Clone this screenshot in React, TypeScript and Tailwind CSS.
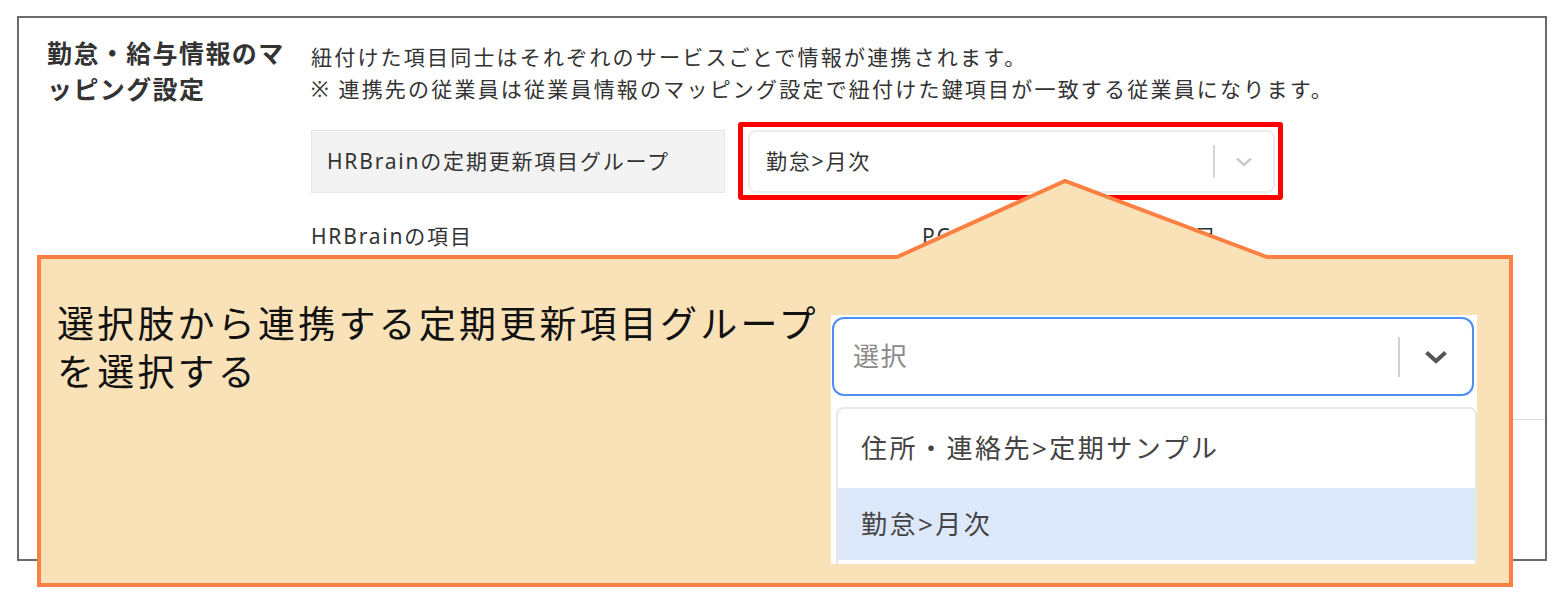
export default function App() {
  return (
    <div className="relative w-[1567px] h-[605px] bg-white overflow-hidden font-['Noto_Sans','Noto_Sans_CJK_JP',sans-serif]">
      {/* settings panel */}
      <div className="ml-[17px] mt-[16px] w-[1530px] h-[545px] border-2 border-[#6a6a6a] flex pt-[17px] pl-[28px]">
        <div className="w-[264px] shrink-0 text-[25px] leading-[36px] tracking-[1.4px] font-bold text-[#333]">
          勤怠・給与情報のマ
          <br />
          ッピング設定
        </div>
        <div className="flex-1 flex flex-col mt-[6px]">
          <p className="text-[21px] leading-[32px] tracking-[2.2px] text-[#333] whitespace-nowrap">
            紐付けた項目同士はそれぞれのサービスごとで情報が連携されます。
            <br />※ 連携先の従業員は従業員情報のマッピング設定で紐付けた鍵項目が一致する従業員になります。
          </p>
          <div className="flex items-center gap-[23px] mt-[25px]">
            <div className="w-[414px] h-[63px] bg-[#f3f3f3] border border-[#e6e6e6] flex items-center pl-[15px] text-[21px] tracking-[1.8px] text-[#333]">
              HRBrainの定期更新項目グループ
            </div>
            <div className="relative">
              <div className="w-[527px] h-[63px] border-2 border-[#ececec] rounded-[8px] flex items-center">
                <span className="flex-1 pl-[16px] text-[21px] tracking-[1.8px] text-[#333]">勤怠&gt;月次</span>
                <span className="w-[2px] h-[33px] bg-[#d6d6d6]" />
                <span className="w-[58px] flex justify-center">
                  <svg width="18" height="10" viewBox="0 0 18 10">
                    <polyline points="2,1.5 9,8 16,1.5" fill="none" stroke="#cccccc" strokeWidth="2.6" />
                  </svg>
                </span>
              </div>
              <div className="absolute left-[-10px] right-[-8px] top-[-8px] bottom-[-7px] border-[5px] border-[#ff0000] rounded-[3px]" />
            </div>
          </div>
          <div className="flex mt-[27px] text-[21px] leading-[32px] tracking-[1.8px] text-[#333]">
            <span className="w-[611px]">HRBrainの項目</span>
            <span>PCAクラウド 給与 DXの項目</span>
          </div>
          <div className="h-[168px] border-b border-[#dddddd]" />
        </div>
      </div>

      {/* callout shape */}
      <svg className="absolute left-0 top-0" width="1567" height="605" viewBox="0 0 1567 605">
        <polygon
          points="39,257 897,257 1065,181 1267,257 1511,257 1511,585 39,585"
          fill="#fae2b8"
          stroke="#fd8042"
          strokeWidth="4"
          strokeLinejoin="miter"
        />
      </svg>

      {/* callout content */}
      <div className="absolute left-[39px] top-[259px] w-[1472px] h-[326px] flex">
        <p className="pl-[18px] pt-[41px] text-[37px] leading-[48px] tracking-[3.2px] text-[#111] whitespace-nowrap">
          選択肢から連携する定期更新項目グループ
          <br />
          を選択する
        </p>
        <div className="ml-auto mr-[34px] mt-[56px] w-[646px] h-[249px] bg-white flex flex-col">
          <div className="ml-[1px] mt-[2px] w-[642px] h-[79px] border-2 border-[#4d8ff0] rounded-[12px] flex items-center">
            <span className="flex-1 pl-[19px] text-[26px] tracking-[1.5px] text-[#8a8a8a]">選択</span>
            <span className="w-[2px] h-[40px] bg-[#d2d2d2]" />
            <span className="w-[72px] flex justify-center">
              <svg width="24" height="14" viewBox="0 0 24 14">
                <polyline points="2.5,2.5 12,11 21.5,2.5" fill="none" stroke="#555555" strokeWidth="4" />
              </svg>
            </span>
          </div>
          <div className="ml-[5px] mt-[11px] w-[641px] flex-1 border-2 border-b-0 border-[#e8e8e8] rounded-t-[8px] flex flex-col">
            <div className="h-[79px] flex items-center pl-[23px] text-[26px] tracking-[2.5px] text-[#444]">
              住所・連絡先&gt;定期サンプル
            </div>
            <div className="h-[72px] bg-[#dde9fb] flex items-center pl-[23px] text-[26px] tracking-[2.5px] text-[#444]">
              勤怠&gt;月次
            </div>
          </div>
        </div>
      </div>
    </div>
  );
}
